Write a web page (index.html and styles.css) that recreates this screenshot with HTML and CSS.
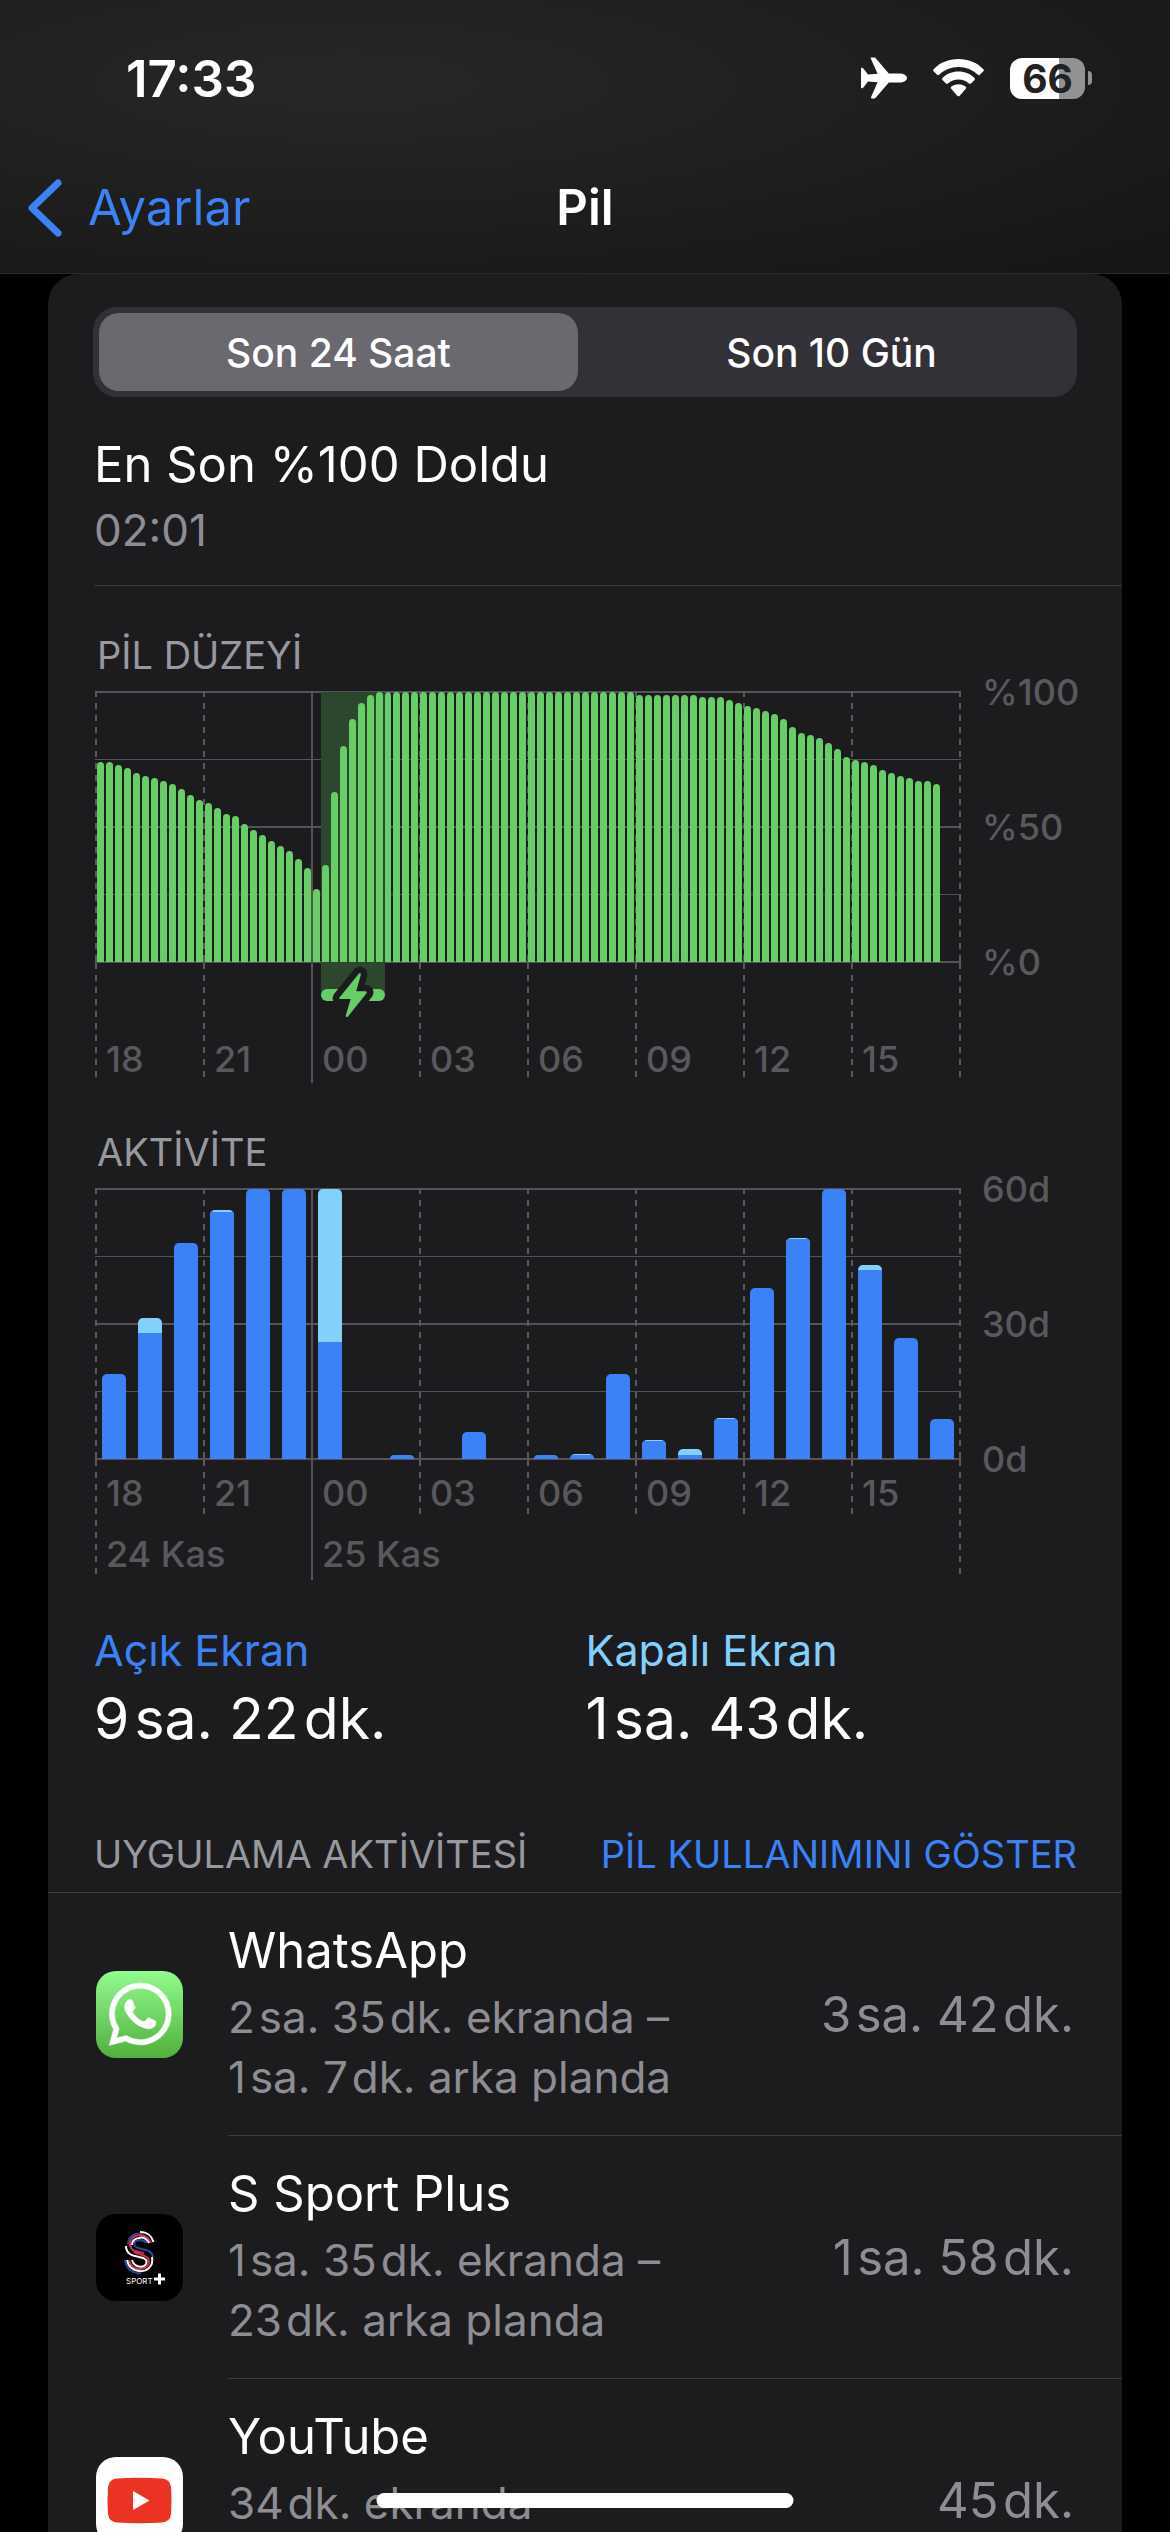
FILE: index.html
```html
<!DOCTYPE html>
<html lang="tr">
<head>
    <meta charset="UTF-8">
    <meta name="viewport" content="width=device-width, initial-scale=1.0">
    <title>Pil</title>
    <link rel="stylesheet" href="styles.css">
</head>
<body>
    <header class="top">
        <div class="status-bar">
            <span class="clock">17:33</span>
            <div class="status-icons">
                <svg class="plane" viewBox="0 0 46 42" aria-hidden="true">
                    <path fill="#fff" d="M10 0.6H13.2C14 0.6 14.6 1 15.1 1.7L27.8 16.5H38.5C42.6 16.5 46 18.6 46 21S42.6 25.5 38.5 25.5H27.8L15.1 40.3C14.6 41 14 41.4 13.2 41.4H11C10.2 41.4 9.8 40.9 10.1 40.1L16.6 25.3L7 24.5L2.6 30.2C2.2 30.9 1.6 31.2 0.9 31.2H0.6C0.2 31.2 0 30.9 0 30.4V11.6C0 11.1 0.2 10.8 0.6 10.8H0.9C1.6 10.8 2.2 11.1 2.6 11.8L7 17.5L16.6 16.7L10 1.9C9.7 1.1 9.5 0.6 10 0.6Z"/>
                </svg>
                <svg class="wifi" viewBox="0 0 51 38" aria-hidden="true">
                    <path fill="#fff" d="M25.5 0C35.3 0 44.200 3.700 50.400 10.200C51 10.900 51 11.700 50.400 12.300L46.900 15.800C46.300 16.400 45.500 16.400 44.900 15.800C39.900 10.800 33 8 25.500 8S11.100 10.800 6.100 15.800C5.500 16.400 4.700 16.400 4.100 15.800L0.600 12.300C0 11.700 0 10.900 0.600 10.200C6.800 3.700 15.700 0 25.500 0Z"/>
                    <path fill="#fff" d="M25.500 12.600C31.900 12.600 37.400 15 41.500 19C42.100 19.600 42.100 20.400 41.500 21L38 24.500C37.400 25.100 36.600 25.100 36 24.600C33.100 22 29.500 20.500 25.500 20.500S17.900 22 15 24.600C14.400 25.100 13.600 25.100 13 24.500L9.500 21C8.900 20.400 8.900 19.600 9.500 19C13.600 15 19.100 12.600 25.500 12.600Z"/>
                    <path fill="#fff" d="M25.500 25.200C28.400 25.200 30.900 26.200 32.800 27.800C33.400 28.400 33.400 29.100 32.800 29.700L26.500 36.900C25.900 37.500 25.100 37.500 24.500 36.900L18.200 29.700C17.600 29.100 17.600 28.400 18.200 27.800C20.100 26.200 22.600 25.200 25.500 25.200Z"/>
                </svg>
                <div class="battery">
                    <span class="battery-level">66</span>
                    <span class="battery-cap"></span>
                </div>
            </div>
        </div>
        <nav class="nav-bar">
            <a class="back" href="#">
                <svg viewBox="0 0 34 58" aria-hidden="true">
                    <path d="M30 4L4 29L30 54" fill="none" stroke="currentColor" stroke-width="7" stroke-linecap="round" stroke-linejoin="round"/>
                </svg>
                Ayarlar
            </a>
            <h1>Pil</h1>
        </nav>
    </header>

    <main class="card">
        <div class="segmented">
            <button type="button" class="active">Son 24 Saat</button>
            <button type="button">Son 10 Gün</button>
        </div>

        <section class="last-charge">
            <h2>En Son %100 Doldu</h2>
            <p>02:01</p>
        </section>

        <section class="chart-section">
            <h3>PİL DÜZEYİ</h3>
            <div class="chart">
                <div class="plot">
                    <div class="columns">
                        <i></i><i></i><i class="solid"></i><i></i><i></i><i></i><i></i><i></i><i></i>
                    </div>
                    <div class="charging" id="charging">
                        <svg viewBox="0 0 64 66" aria-hidden="true">
                            <rect x="0" y="27" width="64" height="12" rx="6" fill="#67ce67"/>
                            <path class="bolt-gap" d="M38 11.500L18.500 35.500Q17.500 37 19.500 37H29.700L24.800 53.500Q25 56 27 54.500L45.700 31Q46.500 29.200 44.500 29.200H35.200L39.800 13Q40 10.200 38 11.500Z"/>
                            <path class="bolt" d="M38 11.500L18.500 35.500Q17.500 37 19.500 37H29.700L24.800 53.500Q25 56 27 54.500L45.700 31Q46.500 29.200 44.500 29.200H35.200L39.800 13Q40 10.200 38 11.500Z"/>
                        </svg>
                    </div>
                    <div class="bars level" id="levelBars"></div>
                </div>
                <div class="scale"><span>%100</span><span>%50</span><span>%0</span></div>
                <div class="axis tall">
                    <span>18</span><span>21</span><span class="solid">00</span><span>03</span><span>06</span><span>09</span><span>12</span><span>15</span><span></span>
                </div>
            </div>
        </section>

        <section class="chart-section">
            <h3>AKTİVİTE</h3>
            <div class="chart">
                <div class="plot">
                    <div class="columns">
                        <i></i><i></i><i class="solid"></i><i></i><i></i><i></i><i></i><i></i><i></i>
                    </div>
                    <div class="bars activity" id="activityBars"></div>
                </div>
                <div class="scale"><span>60d</span><span>30d</span><span>0d</span></div>
                <div class="axis">
                    <span class="day">18<b>24 Kas</b></span><span>21</span><span class="day solid">00<b>25 Kas</b></span><span>03</span><span>06</span><span>09</span><span>12</span><span>15</span><span class="day"></span>
                </div>
            </div>
        </section>

        <section class="totals">
            <div class="total screen-on">
                <h3>Açık Ekran</h3>
                <p>9&#8202;sa. 22&#8202;dk.</p>
            </div>
            <div class="total screen-off">
                <h3>Kapalı Ekran</h3>
                <p>1&#8202;sa. 43&#8202;dk.</p>
            </div>
        </section>

        <section class="apps">
            <div class="apps-head">
                <h3>UYGULAMA AKTİVİTESİ</h3>
                <button type="button">PİL KULLANIMINI GÖSTER</button>
            </div>
            <ul class="app-list">
                <li>
                    <svg class="app-icon" viewBox="0 0 87 87" aria-hidden="true">
                        <defs>
                            <linearGradient id="waGreen" x1="0" y1="0" x2="0" y2="1">
                                <stop offset="0" stop-color="#92fc8e"/>
                                <stop offset="1" stop-color="#50b03c"/>
                            </linearGradient>
                        </defs>
                        <rect width="87" height="87" rx="20" fill="url(#waGreen)"/>
                        <path transform="translate(13 12) scale(2.600)" fill="#fff" stroke="#fff" stroke-width=".2" d="M17.472 14.382c-.297-.149-1.758-.867-2.030-.967-.273-.099-.471-.148-.670.150-.197.297-.767.966-.940 1.164-.173.199-.347.223-.644.075-.297-.150-1.255-.463-2.390-1.475-.883-.788-1.480-1.761-1.653-2.059-.173-.297-.018-.458.130-.606.134-.133.298-.347.446-.520.149-.174.198-.298.298-.497.099-.198.050-.371-.025-.520-.075-.149-.669-1.612-.916-2.207-.242-.579-.487-.5-.669-.510-.173-.008-.371-.010-.570-.010-.198 0-.520.074-.792.372-.272.297-1.040 1.016-1.040 2.479 0 1.462 1.065 2.875 1.213 3.074.149.198 2.096 3.200 5.077 4.487.709.306 1.262.489 1.694.625.712.227 1.360.195 1.871.118.571-.085 1.758-.719 2.006-1.413.248-.694.248-1.289.173-1.413-.074-.124-.272-.198-.570-.347m-5.421 7.403h-.004a9.870 9.870 0 01-5.031-1.378l-.361-.214-3.741.982.998-3.648-.235-.374a9.860 9.860 0 01-1.510-5.260c.001-5.450 4.436-9.884 9.888-9.884 2.640 0 5.122 1.030 6.988 2.898a9.825 9.825 0 012.893 6.994c-.003 5.450-4.437 9.884-9.885 9.884m8.413-18.297A11.815 11.815 0 0012.050 0C5.495 0 .160 5.335.157 11.892c0 2.096.547 4.142 1.588 5.945L.057 24l6.305-1.654a11.882 11.882 0 005.683 1.448h.005c6.554 0 11.890-5.335 11.893-11.893a11.821 11.821 0 00-3.480-8.413z"/>
                    </svg>
                    <div class="app-info">
                        <h4>WhatsApp</h4>
                        <p>2&#8202;sa. 35&#8202;dk. ekranda –<br>1&#8202;sa. 7&#8202;dk. arka planda</p>
                    </div>
                    <span class="app-time">3&#8202;sa. 42&#8202;dk.</span>
                </li>
                <li>
                    <svg class="app-icon" viewBox="0 0 87 87" aria-hidden="true">
                        <rect width="87" height="87" rx="20" fill="#000"/>
                        <g fill="none" stroke-width="2">
                            <path stroke="#fff" d="M44 18C51 18 56 22 57.500 28"/>
                            <path stroke="#2449a4" d="M46 20C37 18 32 24 32 30"/>
                            <path stroke="#d0304a" d="M55 29C52 21 46 21 43 21C36 22 34 27 34 31C35 38 43 38 48 39"/>
                            <path stroke="#fff" d="M53 29C50 24 46 23 43 24C38 25 36 28 36 31"/>
                            <path stroke="#2449a4" d="M51 29C48 26 46 26 43 26C38 27 37 31 40 33C44 36 56 34 57 43"/>
                            <path stroke="#fff" d="M30 32C30 41 38 42 43 43C49 44 52 46 50 50C47 55 38 53 36 46"/>
                            <path stroke="#d0304a" d="M38 38C44 41 54 41 53 49C51 57 36 58 33 46"/>
                            <path stroke="#fff" d="M56 43C58 53 50 58 43 57C36 56 32 52 31 46"/>
                            <path stroke="#2449a4" d="M29 46C30 55 37 60 45 59"/>
                        </g>
                        <text x="30" y="70" class="sport-word">SPORT</text>
                        <path d="M63.500 59.500V70.500M58 65H69" stroke="#fff" stroke-width="3"/>
                    </svg>
                    <div class="app-info">
                        <h4>S Sport Plus</h4>
                        <p>1&#8202;sa. 35&#8202;dk. ekranda –<br>23&#8202;dk. arka planda</p>
                    </div>
                    <span class="app-time">1&#8202;sa. 58&#8202;dk.</span>
                </li>
                <li>
                    <svg class="app-icon" viewBox="0 0 87 87" aria-hidden="true">
                        <rect width="87" height="87" rx="20" fill="#fff"/>
                        <path fill="#ea3323" d="M21 21.500Q43.500 20 66 21.500Q74 22 75 30Q76 43.500 75 57Q74 65 66 65.500Q43.500 67 21 65.500Q13 65 12 57Q11 43.500 12 30Q13 22 21 21.500Z"/>
                        <path fill="#fff" d="M37 34L53.500 43.500L37 53Z"/>
                    </svg>
                    <div class="app-info">
                        <h4>YouTube</h4>
                        <p>34&#8202;dk. ekranda</p>
                    </div>
                    <span class="app-time">45&#8202;dk.</span>
                </li>
            </ul>
        </section>
    </main>

    <div class="home-indicator"></div>

    <script src="charts.js"></script>
</body>
</html>
```
FILE: styles.css
```css
* {
    box-sizing: border-box;
    margin: 0;
    padding: 0;
}
body {
    display: flex;
    flex-direction: column;
    height: 100vh;
    overflow: hidden;
    background: #000;
    color: #fff;
    font-family: Inter, "Liberation Sans", sans-serif;
}
h1, h2, h3, h4 {
    font-weight: 400;
}
button {
    border: none;
    background: none;
    color: inherit;
    font-family: inherit;
    cursor: pointer;
}

/* Status bar and navigation */
.top {
    flex: none;
    border-bottom: 1px solid #2b2b2d;
    background: radial-gradient(ellipse at 30% 30%, #272728, #1e1e1f 50%, #151516 100%);
}
.status-bar {
    display: flex;
    justify-content: space-between;
    align-items: center;
    height: 156px;
    padding: 0 78px 0 126px;
}
.clock {
    font-size: 51px;
    font-weight: 600;
}
.status-icons {
    display: flex;
    align-items: center;
    gap: 26px;
}
.plane {
    width: 46px;
    height: 42px;
}
.wifi {
    width: 51px;
    height: 38px;
}
.battery {
    display: flex;
    align-items: center;
    gap: 3px;
}
.battery-level {
    width: 75px;
    height: 41px;
    border-radius: 12px;
    background: linear-gradient(to right, #fff 66%, #929292 66%);
    color: #222223;
    font-size: 39px;
    font-weight: 700;
    line-height: 41px;
    text-align: center;
}
.battery-cap {
    width: 4px;
    height: 14px;
    border-radius: 0 4px 4px 0;
    background: #929292;
}
.nav-bar {
    display: grid;
    grid-template-columns: 1fr auto 1fr;
    align-items: center;
    height: 117px;
    padding: 0 28px 14px;
}
.back {
    display: flex;
    align-items: center;
    gap: 26px;
    color: #3b82f7;
    font-size: 49px;
    text-decoration: none;
}
.back svg {
    width: 34px;
    height: 58px;
}
h1 {
    font-size: 49px;
    font-weight: 600;
}

/* Card */
.card {
    flex: 1;
    min-height: 0;
    overflow: hidden;
    margin: 0 48px;
    border-radius: 30px 30px 0 0;
    background: #1c1c1e;
}
.segmented {
    display: grid;
    grid-template-columns: 1fr 1fr;
    gap: 14px;
    height: 90px;
    margin: 33px 45px 0;
    padding: 6px;
    border-radius: 24px;
    background: #323137;
}
.segmented button {
    border-radius: 20px;
    font-size: 39px;
    font-weight: 500;
}
.segmented .active {
    background: #6a696f;
}
.last-charge {
    margin-left: 46px;
    padding: 37px 0 25px;
    border-bottom: 1px solid #3c3c3f;
}
.last-charge h2 {
    font-size: 49px;
    line-height: 62px;
}
.last-charge p {
    padding-top: 4px;
    color: #8d8d93;
    font-size: 44px;
    line-height: 60px;
}

/* Charts */
.chart-section {
    margin: 0 22px 0 47px;
}
.chart-section h3 {
    padding: 45px 0 12px 2px;
    color: #98989f;
    font-size: 38px;
    line-height: 48px;
}
.chart {
    display: grid;
    grid-template-columns: 1fr 139px;
    color: #59595d;
    font-size: 36px;
    font-weight: 500;
    line-height: 36px;
}
.plot {
    display: grid;
    position: relative;
    height: 272px;
    background:
        linear-gradient(#545458, #545458) 0 0 / 100% 2px no-repeat,
        linear-gradient(#545458, #545458) 0 68px / 100% 1px no-repeat,
        linear-gradient(#545458, #545458) 0 135px / 100% 2px no-repeat,
        linear-gradient(#545458, #545458) 0 203px / 100% 1px no-repeat,
        linear-gradient(#545458, #545458) 0 270px / 100% 2px no-repeat;
}
.columns, .bars {
    grid-area: 1 / 1;
    min-height: 0;
}
.columns, .axis {
    display: grid;
    grid-template-columns: repeat(8, minmax(0, 1fr)) 2px;
}
.columns i, .axis span {
    background: repeating-linear-gradient(#59595d 0 6px, transparent 6px 12px) 0 0 / 2px 100% no-repeat;
}
.columns .solid, .axis .solid {
    background: linear-gradient(#545458, #545458) 0 0 / 2px 100% no-repeat;
}
.bars {
    display: flex;
    align-items: flex-end;
    position: relative;
    margin: 1px;
}
.bar {
    flex: none;
    border-radius: 4px 4px 0 0;
}
.level .bar {
    width: calc(100% / 96);
    border: solid transparent;
    border-width: 0 1px;
    background: #67ce67;
    background-clip: padding-box;
}
.activity .bar {
    display: flex;
    flex-direction: column;
    justify-content: flex-end;
    width: calc(100% / 36);
    margin: 0 calc(100% / 144);
    border-radius: 5px 5px 0 0;
    overflow: hidden;
    background: #84d0fd;
}
.activity .bar div {
    background: #3b82f7;
}
.charging {
    position: absolute;
    top: 1px;
    height: 304px;
    background: #2d472e;
}
.charging svg {
    position: absolute;
    left: 0;
    top: 270px;
    width: 64px;
    height: 66px;
}
.bolt {
    fill: #67ce67;
}
.bolt-gap {
    fill: #1c1c1e;
    stroke: #1c1c1e;
    stroke-width: 13px;
    stroke-linejoin: round;
}
.scale {
    display: flex;
    flex-direction: column;
    justify-content: space-between;
    margin: -17px 0;
    padding-left: 21px;
}
.axis {
    align-items: start;
    height: 120px;
}
.axis span {
    height: 54px;
    padding: 15px 0 0 11px;
    white-space: nowrap;
}
.axis b {
    display: block;
    padding-top: 25px;
    font-weight: 500;
}
.axis .day {
    height: 114px;
}
.axis.tall span {
    height: 114px;
    padding-top: 78px;
}
.axis .solid, .axis.tall .solid {
    height: 120px;
}
.axis span:last-child {
    padding-left: 0;
}

/* Screen on / off totals */
.totals {
    display: grid;
    grid-template-columns: 1fr 1fr;
    padding: 40px 45px 0 46px;
}
.total h3 {
    font-size: 43px;
    line-height: 60px;
}
.total p {
    padding-top: 4px;
    font-size: 57px;
    line-height: 70px;
}
.screen-on h3 {
    color: #3b82f7;
}
.screen-off h3 {
    color: #84d0fd;
}

/* App list */
.apps-head {
    display: flex;
    justify-content: space-between;
    padding: 76px 45px 14px 46px;
    border-bottom: 1px solid #3c3c3f;
    font-size: 38px;
    line-height: 48px;
}
.apps-head h3 {
    color: #98989f;
    font-size: 38px;
}
.apps-head button {
    color: #3b82f7;
    font-size: 38px;
    line-height: 48px;
}
.app-list {
    list-style: none;
}
.app-list li {
    display: grid;
    grid-template-columns: 87px 1fr;
    column-gap: 45px;
    align-items: center;
    position: relative;
    height: 243px;
    padding-left: 48px;
}
.app-icon {
    width: 87px;
    height: 87px;
}
.sport-word {
    fill: #fff;
    font-size: 8px;
}
.app-info {
    height: 243px;
    padding: 26px 0;
    border-bottom: 1px solid #3c3c3f;
}
.app-info h4 {
    font-size: 49px;
    line-height: 64px;
}
.app-info p {
    padding-top: 4px;
    color: #8d8d93;
    font-size: 44px;
    line-height: 60px;
}
.app-time {
    position: absolute;
    right: 48px;
    color: #8d8d93;
    font-size: 49px;
}

.home-indicator {
    position: fixed;
    left: 50%;
    bottom: 24px;
    width: 417px;
    height: 15px;
    border-radius: 8px;
    background: #fff;
    transform: translateX(-50%);
}
```
FILE: charts.js
```js
// Battery level in percent, one value per 15 minutes starting at 18:00
const levels = [
    74, 74, 73, 72, 70, 69, 68, 67, 66, 64, 62, 60,
    59, 57, 55, 54, 51, 49, 47, 45, 43, 41, 38, 35,
    27, 36, 63, 80, 90, 96, 99,
    ...Array(29).fill(100),
    99, 99, 99, 99, 99, 99, 99, 98, 98, 98, 97, 96,
    95, 94, 93, 92, 90, 87, 85, 84, 83, 81, 79, 76,
    75, 74, 73, 71, 70, 69, 68, 67, 67, 66
];

// Minutes per hour starting at 18:00: [total, screen on]
const activity = [
    [19, 19], [31.3, 28], [48, 48], [55.3, 54.9], [60, 60], [60, 60],
    [60, 26], [0, 0], [0.9, 0.9], [0, 0], [6, 6], [0, 0],
    [0.9, 0.9], [1.2, 0.9], [19, 19], [4.2, 4], [2.2, 0.9], [9.2, 9],
    [38, 38], [49.2, 48.9], [60, 60], [43.1, 42], [27, 27], [9, 9]
];

const levelBars = document.getElementById('levelBars');
levels.forEach(value => {
    const bar = document.createElement('div');
    bar.className = 'bar';
    bar.style.height = value + '%';
    levelBars.appendChild(bar);
});

const activityBars = document.getElementById('activityBars');
activity.forEach(([total, on]) => {
    const bar = document.createElement('div');
    const screenOn = document.createElement('div');
    bar.className = 'bar';
    bar.style.height = (total / 60 * 100) + '%';
    screenOn.style.height = (total ? on / total * 100 : 0) + '%';
    bar.appendChild(screenOn);
    activityBars.appendChild(bar);
});

// Charging ran from the 25th quarter for a bit over seven quarters
const charging = document.getElementById('charging');
charging.style.left = (25 / 96 * 100) + '%';
charging.style.width = (7.1 / 96 * 100) + '%';
```
